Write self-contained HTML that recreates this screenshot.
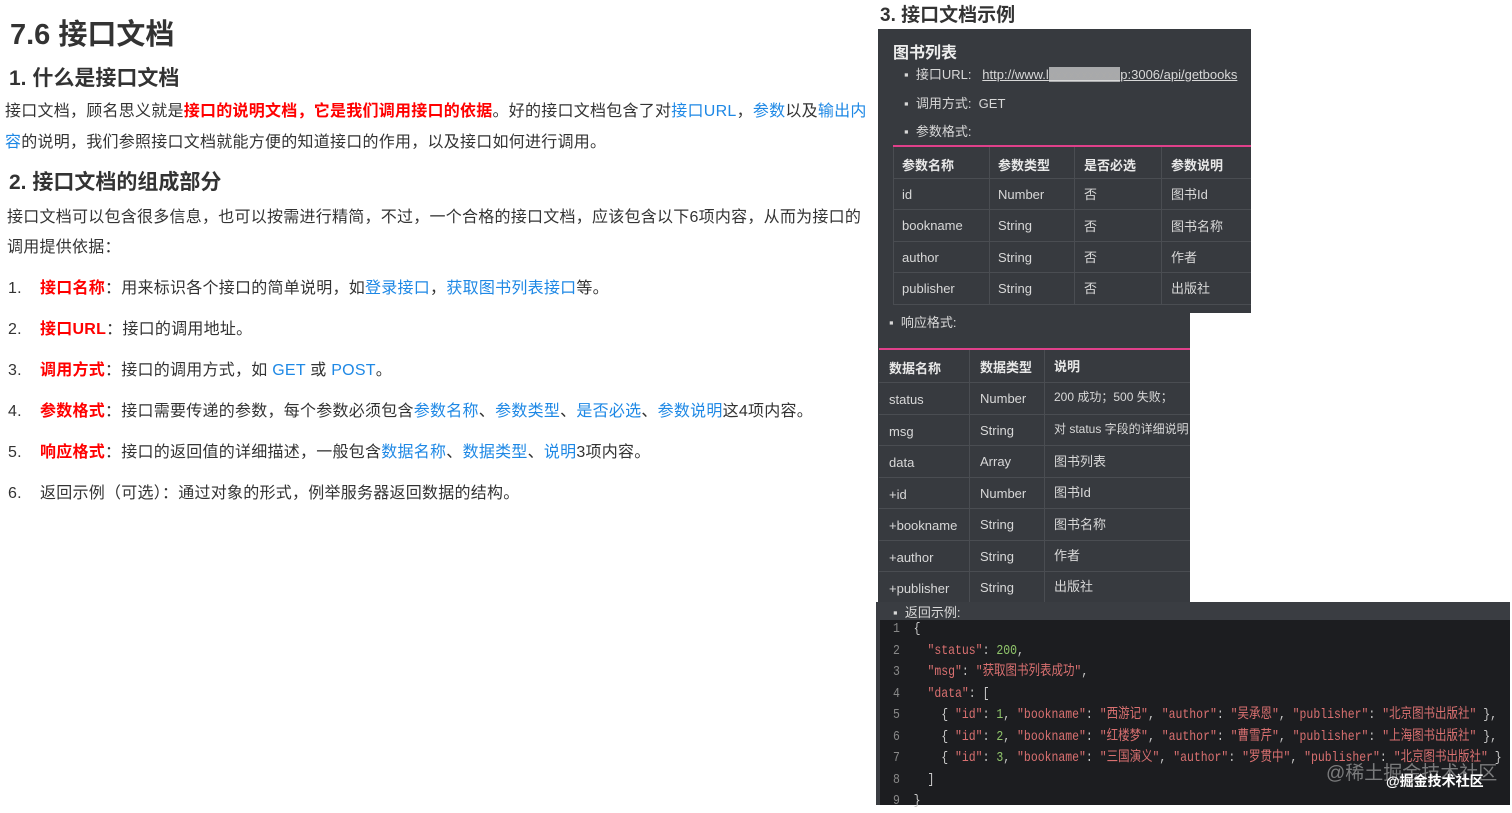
<!DOCTYPE html>
<html><head><meta charset="utf-8">
<style>
*{margin:0;padding:0;box-sizing:border-box}
body{width:1512px;height:805px;background:#fff;position:relative;overflow:hidden;font-family:"Liberation Sans","Noto Sans CJK SC",sans-serif;color:#333}
.a{position:absolute;white-space:nowrap}
.p{font-size:16px;line-height:20px;letter-spacing:0.25px}
.r{color:#f00;font-weight:bold}
.b{color:#1e88e5}
.dk{position:absolute;background:#373a3f}
.t{color:#d8d8d8;font-size:13px}
.th{color:#e8e8e8;font-size:13px;font-weight:bold}
.vl{position:absolute;width:1px;background:#4a4d52}
.hl{position:absolute;height:1px;background:#4a4d52}
.code{font-family:"Liberation Mono","Noto Sans CJK SC",monospace;font-size:14px;color:#c8c8c8;transform:scaleX(0.82);transform-origin:0 0}
.k{color:#d97070}.n{color:#8fc46a}.ln{color:#888}
</style></head><body>
<div class="a" style="left:10px;top:18px;font-size:29px;font-weight:bold;line-height:34px">7.6 接口文档</div>
<div class="a" style="left:9px;top:66px;font-size:21px;font-weight:bold;line-height:26px">1. 什么是接口文档</div>
<div class="a p" style="left:5px;top:102px">接口文档，顾名思义就是<span class="r">接口的说明文档，它是我们调用接口的依据</span>。好的接口文档包含了对<span class="b">接口URL</span>，<span class="b">参数</span>以及<span class="b">输出内</span></div>
<div class="a p" style="left:5px;top:133px"><span class="b">容</span>的说明，我们参照接口文档就能方便的知道接口的作用，以及接口如何进行调用。</div>
<div class="a" style="left:9px;top:170px;font-size:21px;font-weight:bold;line-height:26px">2. 接口文档的组成部分</div>
<div class="a p" style="left:7px;top:208px">接口文档可以包含很多信息，也可以按需进行精简，不过，一个合格的接口文档，应该包含以下6项内容，从而为接口的</div>
<div class="a p" style="left:7px;top:238px">调用提供依据：</div>
<div class="a p" style="left:8px;top:279px">1.</div><div class="a p" style="left:40px;top:279px"><span class="r">接口名称</span>：用来标识各个接口的简单说明，如<span class="b">登录接口</span>，<span class="b">获取图书列表接口</span>等。</div>
<div class="a p" style="left:8px;top:320px">2.</div><div class="a p" style="left:40px;top:320px"><span class="r">接口URL</span>：接口的调用地址。</div>
<div class="a p" style="left:8px;top:361px">3.</div><div class="a p" style="left:40px;top:361px"><span class="r">调用方式</span>：接口的调用方式，如 <span class="b">GET</span> 或 <span class="b">POST</span>。</div>
<div class="a p" style="left:8px;top:402px">4.</div><div class="a p" style="left:40px;top:402px"><span class="r">参数格式</span>：接口需要传递的参数，每个参数必须包含<span class="b">参数名称</span>、<span class="b">参数类型</span>、<span class="b">是否必选</span>、<span class="b">参数说明</span>这4项内容。</div>
<div class="a p" style="left:8px;top:443px">5.</div><div class="a p" style="left:40px;top:443px"><span class="r">响应格式</span>：接口的返回值的详细描述，一般包含<span class="b">数据名称</span>、<span class="b">数据类型</span>、<span class="b">说明</span>3项内容。</div>
<div class="a p" style="left:8px;top:484px">6.</div><div class="a p" style="left:40px;top:484px">返回示例（可选）：通过对象的形式，例举服务器返回数据的结构。</div>

<div class="a" style="left:880px;top:4px;font-size:19px;font-weight:bold;line-height:24px">3. 接口文档示例</div>

<div class="dk" style="left:878px;top:29px;width:373px;height:284px"></div>
<div class="dk" style="left:878px;top:312px;width:312px;height:292px"></div>
<div class="dk" style="left:876px;top:602px;width:634px;height:20px;background:#3a3d42"></div>
<div class="dk" style="left:876px;top:620px;width:634px;height:185px;background:#1c1d20"></div>
<div class="a" style="left:876px;top:620px;width:4px;height:185px;background:#3a3d42"></div>

<div class="a" style="left:893px;top:39px;color:#eee;font-size:16px;font-weight:bold">图书列表</div>
<div class="a t" style="left:904px;top:64px;font-size:13px">▪ &nbsp;接口URL: &nbsp;&nbsp;<span style="text-decoration:underline">http://www.l<span style="color:#aaa;background:#a8a9ab">xxxxxxxxxxx</span>p:3006/api/getbooks</span></div>
<div class="a t" style="left:904px;top:93px">▪ &nbsp;调用方式: &nbsp;GET</div>
<div class="a t" style="left:904px;top:121px">▪ &nbsp;参数格式:</div>
<div class="a" style="left:893px;top:145px;width:358px;height:2px;background:#e0408a"></div>
<div class="vl" style="left:893px;top:147px;height:157px"></div>
<div class="vl" style="left:989px;top:147px;height:157px"></div>
<div class="vl" style="left:1074px;top:147px;height:157px"></div>
<div class="vl" style="left:1161px;top:147px;height:157px"></div>
<div class="hl" style="left:893px;top:178px;width:358px"></div>
<div class="hl" style="left:893px;top:209px;width:358px"></div>
<div class="hl" style="left:893px;top:241px;width:358px"></div>
<div class="hl" style="left:893px;top:272px;width:358px"></div>
<div class="hl" style="left:893px;top:304px;width:358px"></div>
<div class="a th" style="left:902px;top:155px">参数名称</div><div class="a th" style="left:998px;top:155px">参数类型</div><div class="a th" style="left:1084px;top:155px">是否必选</div><div class="a th" style="left:1171px;top:155px">参数说明</div>
<div class="a t" style="left:902px;top:187px">id</div><div class="a t" style="left:998px;top:187px">Number</div><div class="a t" style="left:1084px;top:184px">否</div><div class="a t" style="left:1171px;top:184px">图书Id</div>
<div class="a t" style="left:902px;top:218px">bookname</div><div class="a t" style="left:998px;top:218px">String</div><div class="a t" style="left:1084px;top:216px">否</div><div class="a t" style="left:1171px;top:216px">图书名称</div>
<div class="a t" style="left:902px;top:250px">author</div><div class="a t" style="left:998px;top:250px">String</div><div class="a t" style="left:1084px;top:247px">否</div><div class="a t" style="left:1171px;top:247px">作者</div>
<div class="a t" style="left:902px;top:281px">publisher</div><div class="a t" style="left:998px;top:281px">String</div><div class="a t" style="left:1084px;top:278px">否</div><div class="a t" style="left:1171px;top:278px">出版社</div>

<div class="a t" style="left:889px;top:312px">▪ &nbsp;响应格式:</div>
<div class="a" style="left:879px;top:348px;width:311px;height:2px;background:#e0408a"></div>
<div class="vl" style="left:969px;top:350px;height:252px"></div>
<div class="vl" style="left:1044px;top:350px;height:252px"></div>
<div class="hl" style="left:879px;top:382px;width:311px"></div>
<div class="hl" style="left:879px;top:414px;width:311px"></div>
<div class="hl" style="left:879px;top:445px;width:311px"></div>
<div class="hl" style="left:879px;top:477px;width:311px"></div>
<div class="hl" style="left:879px;top:508px;width:311px"></div>
<div class="hl" style="left:879px;top:540px;width:311px"></div>
<div class="hl" style="left:879px;top:571px;width:311px"></div>
<div class="a th" style="left:889px;top:358px">数据名称</div><div class="a th" style="left:980px;top:357px">数据类型</div><div class="a th" style="left:1054px;top:356px">说明</div>
<div class="a t" style="left:889px;top:392px">status</div><div class="a t" style="left:980px;top:391px">Number</div><div class="a t" style="left:1054px;top:388px;font-size:12px">200 成功；500 失败；</div>
<div class="a t" style="left:889px;top:424px">msg</div><div class="a t" style="left:980px;top:423px">String</div><div class="a t" style="left:1054px;top:420px;font-size:12px">对 status 字段的详细说明</div>
<div class="a t" style="left:889px;top:455px">data</div><div class="a t" style="left:980px;top:454px">Array</div><div class="a t" style="left:1054px;top:451px">图书列表</div>
<div class="a t" style="left:889px;top:487px">+id</div><div class="a t" style="left:980px;top:486px">Number</div><div class="a t" style="left:1054px;top:482px">图书Id</div>
<div class="a t" style="left:889px;top:518px">+bookname</div><div class="a t" style="left:980px;top:517px">String</div><div class="a t" style="left:1054px;top:514px">图书名称</div>
<div class="a t" style="left:889px;top:550px">+author</div><div class="a t" style="left:980px;top:549px">String</div><div class="a t" style="left:1054px;top:545px">作者</div>
<div class="a t" style="left:889px;top:581px">+publisher</div><div class="a t" style="left:980px;top:580px">String</div><div class="a t" style="left:1054px;top:576px">出版社</div>
<div class="a t" style="left:893px;top:602px">▪ &nbsp;返回示例:</div>

<div class="a code" style="left:893px;top:619px;line-height:21.5px;white-space:pre"><span class="ln">1</span>  {
<span class="ln">2</span>    <span class="k">"status"</span>: <span class="n">200</span>,
<span class="ln">3</span>    <span class="k">"msg"</span>: <span class="k">"获取图书列表成功"</span>,
<span class="ln">4</span>    <span class="k">"data"</span>: [
<span class="ln">5</span>      { <span class="k">"id"</span>: <span class="n">1</span>, <span class="k">"bookname"</span>: <span class="k">"西游记"</span>, <span class="k">"author"</span>: <span class="k">"吴承恩"</span>, <span class="k">"publisher"</span>: <span class="k">"北京图书出版社"</span> },
<span class="ln">6</span>      { <span class="k">"id"</span>: <span class="n">2</span>, <span class="k">"bookname"</span>: <span class="k">"红楼梦"</span>, <span class="k">"author"</span>: <span class="k">"曹雪芹"</span>, <span class="k">"publisher"</span>: <span class="k">"上海图书出版社"</span> },
<span class="ln">7</span>      { <span class="k">"id"</span>: <span class="n">3</span>, <span class="k">"bookname"</span>: <span class="k">"三国演义"</span>, <span class="k">"author"</span>: <span class="k">"罗贯中"</span>, <span class="k">"publisher"</span>: <span class="k">"北京图书出版社"</span> }
<span class="ln">8</span>    ]
<span class="ln">9</span>  }</div>
<div class="a" style="left:1326px;top:758px;font-size:19px;color:rgba(200,200,200,0.55)">@稀土掘金技术社区</div>
<div class="a" style="left:1386px;top:771px;font-size:14px;color:#fff;font-weight:bold">@掘金技术社区</div>
</body></html>
